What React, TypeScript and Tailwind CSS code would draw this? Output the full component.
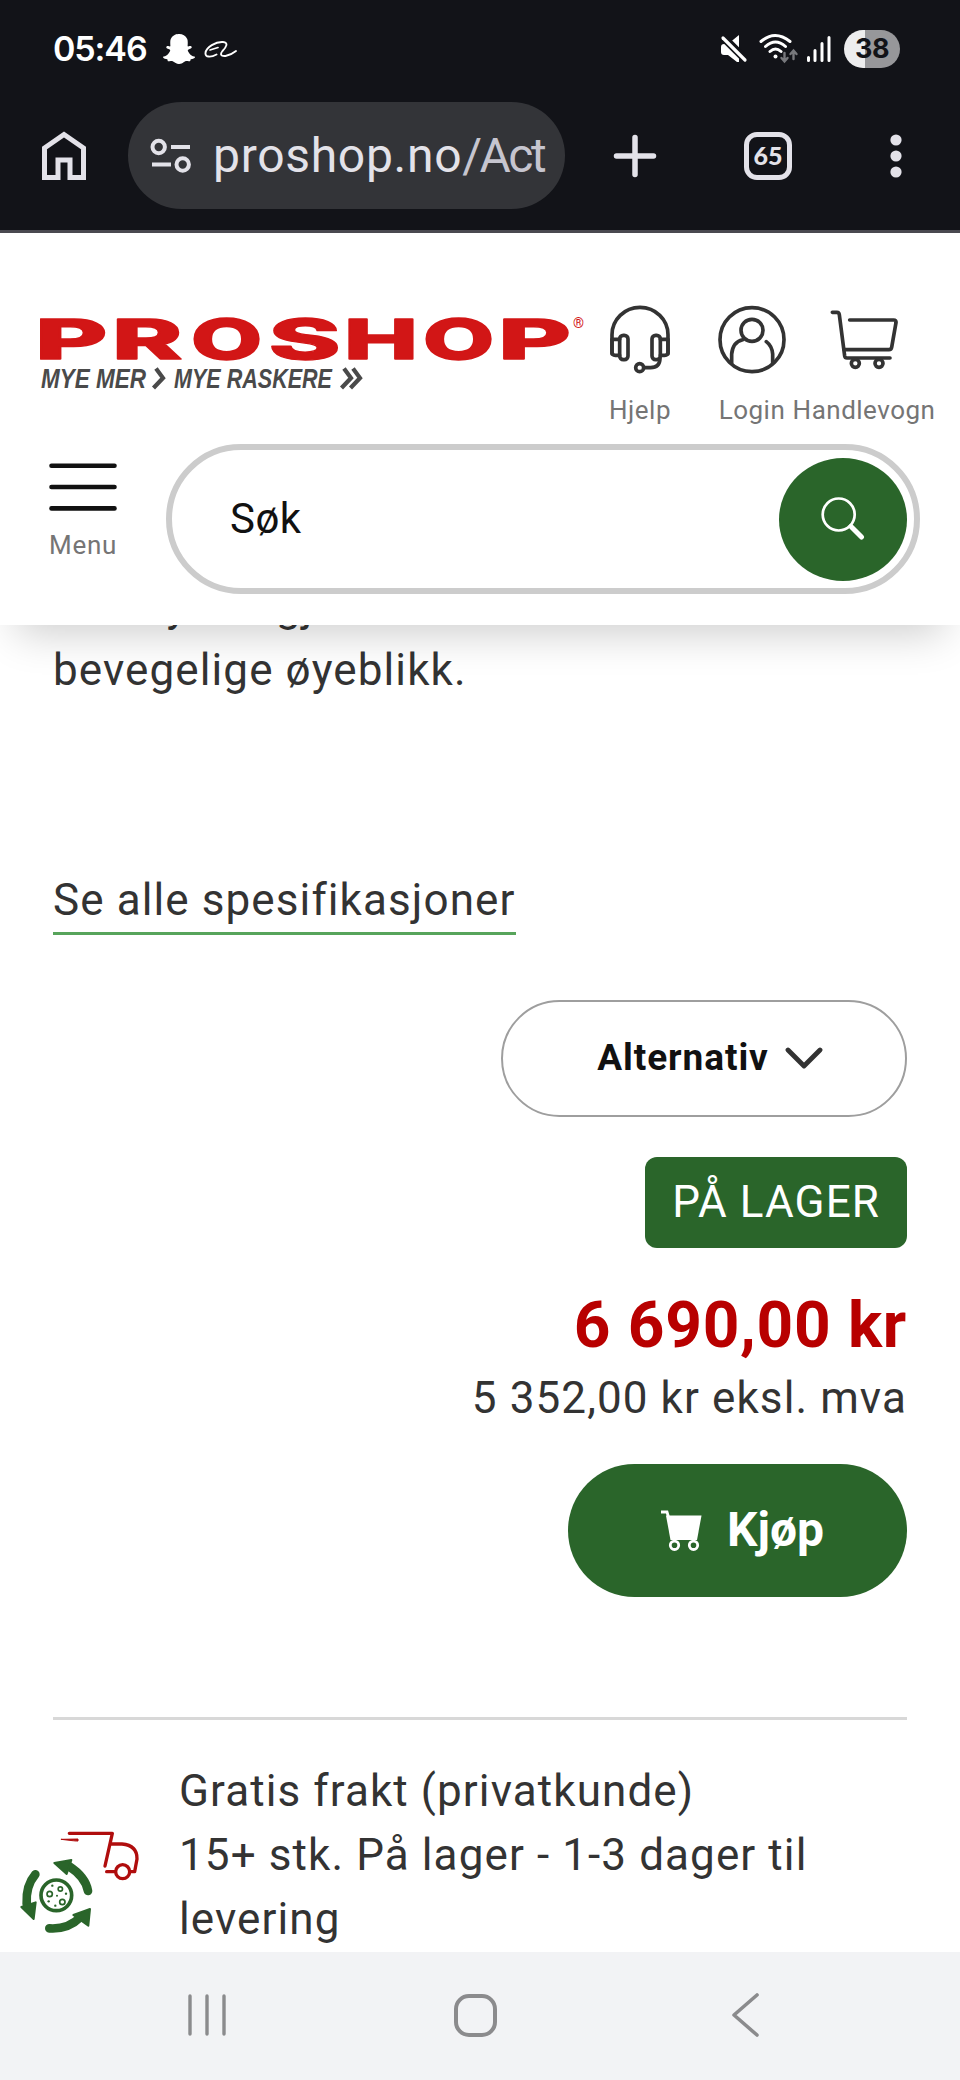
import type { ReactNode } from "react";
import { FaSnapchatGhost } from "react-icons/fa";

// Each glyph is stretched to the same 67px wide slot of the wordmark.
const WORDMARK = [
  { char: "P", x: -5.5, scale: 2.02 },
  { char: "R", x: 72, scale: 1.92 },
  { char: "O", x: 151, scale: 1.66 },
  { char: "S", x: 228.5, scale: 1.97 },
  { char: "H", x: 304, scale: 1.78 },
  { char: "O", x: 383, scale: 1.66 },
  { char: "P", x: 458, scale: 2.02 },
];

function StatusBar() {
  return (
    <div className="flex h-[102px] items-start pl-[53px] pr-[60px] text-white">
      <span className="mt-[29px] w-[110px] font-['Inter',sans-serif] text-[34px] leading-[40px] font-semibold tracking-[-1.1px]">
        05:46
      </span>
      <FaSnapchatGhost className="mt-[33px] size-8" />
      <svg className="mt-[40px] ml-[8px]" width="34" height="20" viewBox="0 0 34 20" fill="none" stroke="currentColor" strokeLinecap="round">
        <path d="M13.500 14.500C8 17.500 2 17.500 2.500 13 3 7 13 1.500 20 2c6 .5 3 5.500-.5 9-2.500 3-2 5.500 3 5Q28 15 33 11" strokeWidth="1.900" />
        <path d="m7 10 8-2.500" strokeWidth="1.700" />
      </svg>

      <div className="ml-auto flex">
        <svg className="mt-[34px]" width="28" height="30" viewBox="0 0 28 30">
          <path d="M2 10h6L19 1v27h-2L8 21H4q-3 0-3-3v-5q0-3 3-3z" fill="white" />
          <path d="M1 1 26 26" stroke="#121318" strokeWidth="8" />
          <path d="M3 4 25 26" stroke="white" strokeWidth="3.200" strokeLinecap="round" />
        </svg>
        <svg className="mt-[32px] ml-[11px]" width="40" height="34" viewBox="0 0 40 34" fill="none" stroke="white" strokeWidth="3" strokeLinecap="round">
          <path d="M2 9.500q14-12 29 0M6.500 14.500q10-9 20 0M11 19.500q5.500-5 11 0" />
          <circle cx="16.500" cy="24.500" r="2" fill="white" stroke="none" />
          <path d="M25.500 21v8m-3-3 3 3.500 3-3.500M34.500 27v-8m-3 3 3-3.500 3 3.500" stroke="#77787c" strokeWidth="2.400" />
        </svg>
        <svg className="mt-[34px] ml-[7px]" width="26" height="30" viewBox="0 0 26 30" stroke="white" strokeWidth="3" strokeLinecap="round">
          <path d="M2.500 23.500v3M9 16.500v10M16 9.500v17M23 3.500v23" />
        </svg>
        <div className="mt-[30px] ml-[12px] flex h-[38px] w-[56px] items-center justify-center rounded-full bg-[linear-gradient(90deg,#ededee_38%,#97979a_38%)] font-['Inter',sans-serif] text-[27px] font-bold tracking-[-0.5px] text-[#121318]">
          38
        </div>
      </div>
    </div>
  );
}

function BrowserBar() {
  return (
    <div className="flex h-[107px] items-center pl-[42px] text-[#e3e2e9]">
      <svg width="44" height="50" viewBox="0 0 44 50" fill="none" stroke="currentColor" strokeWidth="5">
        <path d="M2.500 46.500V17L22 3.500 41.500 17v29.500H28V29H16v17.500z" />
      </svg>
      <div className="ml-[42px] flex h-[107px] w-[437px] items-center rounded-full bg-[#333438] pl-[22px]">
        <svg width="42" height="36" viewBox="0 0 42 36" fill="none" stroke="currentColor" strokeWidth="4">
          <circle cx="8.700" cy="9" r="6.200" />
          <path d="M21 9h19M2 26.500h19" />
          <circle cx="32.700" cy="26.500" r="6.200" />
        </svg>
        <span className="ml-[21px] w-[333px] overflow-hidden font-['Roboto',sans-serif] text-[48px] leading-[64px] tracking-[0.7px] whitespace-nowrap">
          proshop.no<span className="tracking-[-2.5px] text-[#c6c5cf]">/Act</span>
        </span>
      </div>
      <svg className="ml-[48px]" width="44" height="44" viewBox="0 0 44 44" stroke="currentColor" strokeWidth="5.500" strokeLinecap="round">
        <path d="M22 3.500v37M3.500 22h37" />
      </svg>
      <div className="ml-[87px] flex size-12 items-center justify-center rounded-[13px] border-[5.500px] border-current font-['Lato',sans-serif] text-[25px] font-black">
        65
      </div>
      <svg className="ml-[98px]" width="12" height="46" viewBox="0 0 12 46" fill="currentColor">
        <circle cx="6" cy="7" r="5.600" />
        <circle cx="6" cy="23" r="5.600" />
        <circle cx="6" cy="39" r="5.600" />
      </svg>
    </div>
  );
}

function Logo() {
  return (
    <svg className="mt-[77px]" width="544" height="85" viewBox="0 0 544 85">
      <g fill="#d21616" stroke="#d21616" strokeWidth="2" strokeLinejoin="round" fontFamily="Inter, sans-serif" fontWeight="800" fontSize="55.500">
        {WORDMARK.map(({ char, x, scale }, i) => (
          <text key={i} transform={`translate(${x} 48.700) scale(${scale} 1)`} vectorEffect="non-scaling-stroke">
            {char}
          </text>
        ))}
      </g>
      <text x="533" y="18" fill="#d21616" fontFamily="Roboto, sans-serif" fontSize="14">
        ®
      </text>
      <g fill="#4a4a4a" fontFamily="Liberation Sans, sans-serif" fontWeight="700" fontStyle="italic" fontSize="28">
        <text x="1" y="78" textLength="105" lengthAdjust="spacingAndGlyphs">
          MYE MER
        </text>
        <text x="134" y="78" textLength="158" lengthAdjust="spacingAndGlyphs">
          MYE RASKERE
        </text>
      </g>
      <path d="M117 58.500 124 68l-9.500 10M305 58.500l7 9.500-9.500 10M314 58.500l7 9.500-9.500 10" transform="translate(-1)" fill="none" stroke="#4a4a4a" strokeWidth="4.200" />
    </svg>
  );
}

function HeaderLink({ label, viewBox, children }: { label: string; viewBox: string; children: ReactNode }) {
  return (
    <a className="flex w-[112px] flex-col items-center pt-[72px]">
      <svg width="68" height="70" viewBox={viewBox} fill="none" stroke="#333" strokeWidth="11" strokeLinecap="round" strokeLinejoin="round">
        {children}
      </svg>
      <span className="mt-[19px] text-[26px] leading-8 tracking-[0.5px] whitespace-nowrap text-[#757575]">{label}</span>
    </a>
  );
}

function SiteHeader() {
  return (
    <header className="relative z-10 h-[392px] shrink-0 bg-white shadow-[0_24px_40px_-16px_rgba(0,0,0,0.2)]">
      <div className="flex h-[193px] items-start px-10">
        <Logo />
        <HeaderLink label="Hjelp" viewBox="78 45 204 210">
          <path d="M96 192v-58a84 82 0 0 1 168 0v58" />
          <path d="M119 148H96v38q0 10 10 10h13M241 148h23v38q0 10-10 10h-13" />
          <rect x="119" y="136" width="25" height="73" rx="11" />
          <rect x="216" y="136" width="25" height="73" rx="11" />
          <path d="M240 206q-1 27-28 27h-17" />
          <circle cx="179" cy="233" r="12" />
        </HeaderLink>
        <HeaderLink label="Login" viewBox="414 45 204 210">
          <circle cx="516" cy="149" r="96" />
          <circle cx="516" cy="121" r="33" />
          <path d="M455 219v-27q3-36 33-43M578 219v-27q-2-24-19-37" />
        </HeaderLink>
        <HeaderLink label="Handlevogn" viewBox="750 45 204 210">
          <path d="M757 67h14q6 0 7 7l16 124q1 6 7 6h129" />
          <path d="M809 90h132q8 0 7 8l-13 74q-1 7-8 7H793" />
          <circle cx="826" cy="220" r="12" />
          <circle cx="897" cy="220" r="12" />
        </HeaderLink>
      </div>
      <div className="mt-[18px] flex items-start pl-[49px]">
        <button className="mt-[19px] flex w-[68px] flex-col items-center">
          <svg width="68" height="48" viewBox="0 0 68 48" stroke="#111" strokeWidth="4.600" strokeLinecap="round">
            <path d="M2.500 2.700h63M2.500 24h63M2.500 45.400h63" />
          </svg>
          <span className="mt-[18px] text-[26px] leading-8 tracking-wide text-[#757575]">Menu</span>
        </button>
        <div className="ml-[49px] flex h-[150px] w-[754px] items-center justify-between rounded-full border-[6px] border-[#ccc] pr-[7px] pl-[58px]">
          <span className="text-[42px] leading-[50px] tracking-[0.5px] text-[#111]">Søk</span>
          <button className="flex h-[123px] w-32 items-center justify-center rounded-[50%] bg-[#2a652a]">
            <svg width="44" height="44" viewBox="0 0 44 44" fill="none" stroke="white">
              <circle cx="17.700" cy="17.500" r="16" strokeWidth="2.700" />
              <path d="M30 29.500 40.500 40" strokeWidth="5" strokeLinecap="round" />
            </svg>
          </button>
        </div>
      </div>
    </header>
  );
}

function Product() {
  return (
    <section className="mx-[53px] -mt-[51px] flex flex-col items-end text-[44px] leading-[64px] tracking-wide text-[#333]">
      <p className="self-start">
        som lyden gjør
        <br />
        bevegelige øyeblikk.
      </p>
      <a className="mt-[166px] self-start border-b-[3px] border-[#57a45b]">Se alle spesifikasjoner</a>

      <button className="mt-[65px] flex h-[117px] w-[406px] items-center justify-center gap-4 rounded-full border-2 border-[#9e9e9e] pb-[2px] pl-3 text-[37px] font-bold tracking-wide text-[#111]">
        Alternativ
        <svg width="38" height="22" viewBox="0 0 38 22" fill="none" stroke="#333" strokeWidth="4.800" strokeLinecap="round" strokeLinejoin="round">
          <path d="m3 3 16 16L35 3" />
        </svg>
      </button>
      <span className="mt-10 flex h-[91px] items-center rounded-xl bg-[#2a652a] px-[27px] pb-[2px] text-white">PÅ LAGER</span>
      <strong className="mt-10 text-[64px] leading-[76px] font-bold tracking-[0.7px] text-[#b80000]">6 690,00 kr</strong>
      <span className="mt-[2px]">5 352,00 kr eksl. mva</span>
      <button className="mt-[34px] flex h-[133px] w-[339px] items-center rounded-full bg-[#2a652a] pl-[93px] text-[48px] font-bold tracking-normal text-white">
        <svg width="41" height="41" viewBox="0 0 41 41" fill="none" stroke="white">
          <path d="M0 2h6l1.500 5" strokeWidth="2.800" />
          <path d="M5 5.500h35.500L36 30H9.500z" fill="white" stroke="none" />
          <circle cx="13.500" cy="35.300" r="4.200" strokeWidth="2.800" fill="#2a652a" />
          <circle cx="32.500" cy="35.300" r="4.200" strokeWidth="2.800" fill="#2a652a" />
        </svg>
        <span className="ml-[25px] pb-[2px]">Kjøp</span>
      </button>
      <hr className="mt-[120px] w-full border-t-[3px] border-[#d8d8d8]" />
    </section>
  );
}

function Delivery() {
  return (
    <section className="mt-[39px] flex items-start pl-[15px] text-[#333]">
      <svg className="mt-[66px]" width="130" height="115" viewBox="45 375 390 345" fill="none">
        <g stroke="#b00d0d" strokeWidth="10" strokeLinecap="round" strokeLinejoin="round">
          <path d="M208 400h129l-22 98M320 515h25M330 432h36q46 4 45 45l-7 38h-13" />
          <path d="m184 418 50-1v6q-3 1-50-5z" fill="#b00d0d" strokeWidth="3" />
          <circle cx="368" cy="515" r="21" />
        </g>
        <g stroke="#2a652a" strokeWidth="26" strokeLinecap="round">
          <path d="M106 523q-29 34-26 88M264 573q-7-42-58-75M148 685q56 4 94-34" />
        </g>
        <g fill="#2a652a" stroke="#2a652a" strokeWidth="6" strokeLinejoin="round">
          <path d="m64 621 43-14-6 50zM163 489l51-9-14 42zM270 627l-5 50-45-32z" />
        </g>
        <g stroke="#2a652a">
          <circle cx="169" cy="586" r="46" strokeWidth="11" />
          <circle cx="149" cy="582" r="8" strokeWidth="5" />
          <circle cx="181" cy="567" r="6.500" strokeWidth="5" />
          <circle cx="187" cy="606" r="8" strokeWidth="5" />
        </g>
        <g fill="#2a652a">
          <circle cx="157" cy="557" r="3.500" />
          <circle cx="171" cy="587" r="3" />
          <circle cx="198" cy="581" r="3.500" />
          <circle cx="146" cy="604" r="3.500" />
          <circle cx="166" cy="617" r="3.500" />
        </g>
      </svg>
      <p className="ml-[34px] text-[44px] leading-[64px] tracking-wide">
        Gratis frakt (privatkunde)
        <br />
        15+ stk. På lager - 1-3 dager til
        <br />
        levering
      </p>
    </section>
  );
}

function NavigationBar() {
  return (
    <nav className="flex h-32 shrink-0 items-center bg-[#f2f3f5] pb-[2px] pl-[187px] text-[#8b8b8d]">
      <svg width="40" height="44" viewBox="0 0 40 44" stroke="currentColor" strokeWidth="3.400" strokeLinecap="round">
        <path d="M3 3v38M20 3v38M37 3v38" />
      </svg>
      <div className="ml-[227px] h-[43px] w-[43px] rounded-[15px] border-4 border-current" />
      <svg className="ml-[234px]" width="30" height="44" viewBox="0 0 30 44" fill="none" stroke="currentColor" strokeWidth="3.600" strokeLinecap="round" strokeLinejoin="round">
        <path d="M26 2 3 22l23 20" />
      </svg>
    </nav>
  );
}

export default function App() {
  return (
    <div className="flex h-[2080px] w-[960px] flex-col overflow-hidden bg-white font-['Roboto',sans-serif]">
      <div className="h-[233px] shrink-0 border-b-[3px] border-[#4a4950] bg-[#121318]">
        <StatusBar />
        <BrowserBar />
      </div>
      <main className="min-h-0 flex-1 overflow-hidden">
        <SiteHeader />
        <Product />
        <Delivery />
      </main>
      <NavigationBar />
    </div>
  );
}
